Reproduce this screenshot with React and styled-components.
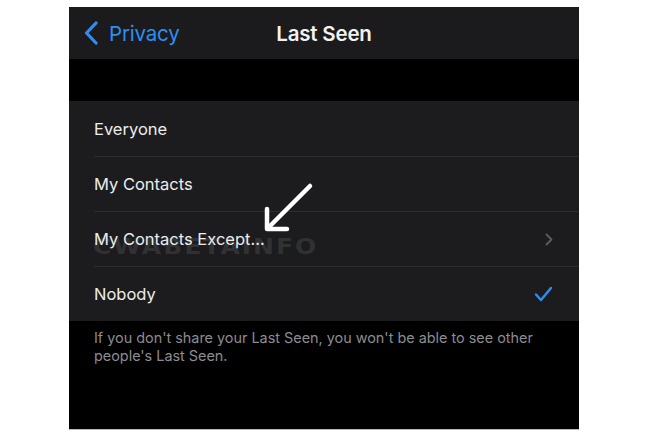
import React from "react";
import styled, { createGlobalStyle } from "styled-components";

const Global = createGlobalStyle`
  html, body { margin: 0; padding: 0; background: #fff; }
  body { font-family: Inter, "Liberation Sans", Arial, sans-serif; }
`;

const Page = styled.div`
  width: 649px;
  height: 439px;
  display: flex;
  justify-content: flex-start;
  padding: 7px 0 0 69px;
  box-sizing: border-box;
`;

const Screen = styled.div`
  position: relative;
  width: 510px;
  height: 422px;
  background: #000;
  display: flex;
  flex-direction: column;
  overflow: hidden;
  border-bottom: 1px solid #b8b8b8;
`;

const NavBar = styled.div`
  position: relative;
  height: 52px;
  background: #1b1b1d;
  display: flex;
  align-items: center;
  padding-left: 15px;
`;

const Back = styled.div`
  display: flex;
  align-items: center;
  gap: 11px;
  color: #2e8ef2;
  font-size: 20.5px;
  letter-spacing: -0.2px;
`;

const Title = styled.div`
  position: absolute;
  left: 0;
  right: 0;
  text-align: center;
  color: #f2f2f2;
  font-size: 20.5px;
  font-weight: 600;
  letter-spacing: -0.2px;
  pointer-events: none;
`;

const Spacer = styled.div`
  height: 42px;
`;

const List = styled.div`
  background: #1c1c1e;
  padding-left: 25px;
`;

const Row = styled.div`
  height: 55px;
  display: flex;
  align-items: center;
  justify-content: space-between;
  padding-right: 26px;
  color: #ececec;
  font-size: 16.5px;
  border-top: ${(p) => (p.$first ? "none" : "1px solid #2d2d30")};
  box-sizing: border-box;
`;

const Footer = styled.p`
  margin: 0;
  padding: 8px 30px 0 25px;
  color: #8c8c91;
  font-size: 14.4px;
  line-height: 18px;
`;

const Watermark = styled.div`
  position: absolute;
  left: 24px;
  top: 225px;
  font-size: 25px;
  font-weight: 900;
  letter-spacing: 2px;
  color: rgba(255, 255, 255, 0.1);
  font-family: "DejaVu Sans", sans-serif;
  transform: scaleY(0.85);
  pointer-events: none;
`;

const Arrow = styled.svg`
  position: absolute;
  left: 190px;
  top: 174px;
`;

const Chevron = () => (
  <svg width="14" height="24" viewBox="0 0 14 24">
    <path d="M12 2 L2.5 12 L12 22" fill="none" stroke="#2e8ef2" strokeWidth="3.2" strokeLinecap="round" strokeLinejoin="round" />
  </svg>
);

const Disclosure = () => (
  <svg width="8" height="13" viewBox="0 0 8 13">
    <path d="M1.5 1.5 L6.5 6.5 L1.5 11.5" fill="none" stroke="#5b5b60" strokeWidth="1.8" strokeLinecap="round" strokeLinejoin="round" />
  </svg>
);

const Check = () => (
  <svg width="19" height="16" viewBox="0 0 19 16">
    <path d="M2 8.5 L7 14 L17 2" fill="none" stroke="#2e8ef2" strokeWidth="2.4" strokeLinecap="round" strokeLinejoin="round" />
  </svg>
);

const options = [
  { label: "Everyone" },
  { label: "My Contacts" },
  { label: "My Contacts Except...", right: <Disclosure /> },
  { label: "Nobody", right: <Check /> },
];

export default function App() {
  return (
    <>
      <Global />
      <Page>
        <Screen>
          <NavBar>
            <Back>
              <Chevron />
              Privacy
            </Back>
            <Title>Last Seen</Title>
          </NavBar>
          <Spacer />
          <List>
            {options.map((o, i) => (
              <Row key={o.label} $first={i === 0}>
                <span>{o.label}</span>
                {o.right}
              </Row>
            ))}
          </List>
          <Footer>
            If you don't share your Last Seen, you won't be able to see other people's Last Seen.
          </Footer>
          <Watermark aria-hidden="true">CWABETAINFO</Watermark>
          <Arrow width="56" height="56" viewBox="0 0 56 56">
            <path d="M51 5 L10 46" stroke="#fff" strokeWidth="4.5" strokeLinecap="round" />
            <path d="M8 28 L8 48 L28 48" fill="none" stroke="#fff" strokeWidth="4.5" strokeLinecap="round" strokeLinejoin="round" />
          </Arrow>
        </Screen>
      </Page>
    </>
  );
}
